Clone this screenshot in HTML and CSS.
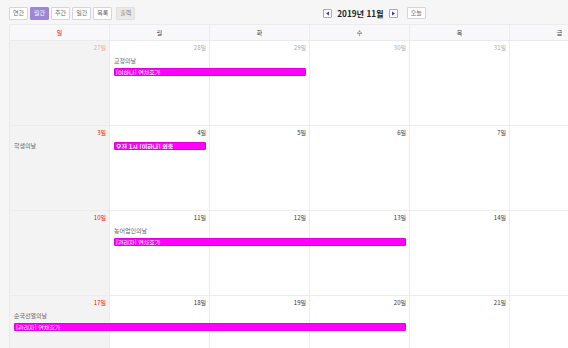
FILE: index.html
```html
<!DOCTYPE html>
<html lang="ko">
<head>
<meta charset="utf-8">
<link rel="stylesheet" href="styles.css">
</head>
<body>
<div class="page">
  <div class="toolbar">
    <div class="views">
      <span class="btn">연간</span>
      <span class="btn active">월간</span>
      <span class="btn">주간</span>
      <span class="btn">일간</span>
      <span class="btn">목록</span>
      <span class="btn print">출력</span>
    </div>
    <div class="nav">
      <span class="navbtn"><svg width="5" height="5" viewBox="0 0 5 5"><path d="M4 0.5 L1 2.5 L4 4.5 Z" fill="#4a2fc2"/></svg></span>
      <span class="title">2019년 11월</span>
      <span class="navbtn"><svg width="5" height="5" viewBox="0 0 5 5"><path d="M1 0.5 L4 2.5 L1 4.5 Z" fill="#4a2fc2"/></svg></span>
      <span class="btn today">오늘</span>
    </div>
  </div>

  <div class="calendar">
    <div class="head">
      <div class="hcell sun">일</div>
      <div class="hcell">월</div>
      <div class="hcell">화</div>
      <div class="hcell">수</div>
      <div class="hcell">목</div>
      <div class="hcell">금</div>
      <div class="hcell">토</div>
    </div>

    <div class="week">
      <div class="day sunday c1"></div><div class="day c2"></div><div class="day c3"></div><div class="day c4"></div><div class="day c5"></div><div class="day c6"></div><div class="day c7"></div>
      <span class="num c1 sun other">27일</span>
      <span class="num c2 other">28일</span>
      <span class="num c3 other">29일</span>
      <span class="num c4 other">30일</span>
      <span class="num c5 other">31일</span>
      <span class="holiday c2">교정의날</span>
      <span class="event r3 s2 e4">[이하나] 연차휴가</span>
    </div>

    <div class="week">
      <div class="day sunday c1"></div><div class="day c2"></div><div class="day c3"></div><div class="day c4"></div><div class="day c5"></div><div class="day c6"></div><div class="day c7"></div>
      <span class="num c1 sun">3일</span>
      <span class="num c2">4일</span>
      <span class="num c3">5일</span>
      <span class="num c4">6일</span>
      <span class="num c5">7일</span>
      <span class="holiday c1">학생의날</span>
      <span class="event r2 s2 e3 strong">오전 1시 [이하나] 외출</span>
    </div>

    <div class="week">
      <div class="day sunday c1"></div><div class="day c2"></div><div class="day c3"></div><div class="day c4"></div><div class="day c5"></div><div class="day c6"></div><div class="day c7"></div>
      <span class="num c1 sun">10일</span>
      <span class="num c2">11일</span>
      <span class="num c3">12일</span>
      <span class="num c4">13일</span>
      <span class="num c5">14일</span>
      <span class="holiday c2">농어업인의날</span>
      <span class="event r3 s2 e5">[관리자] 연차휴가</span>
    </div>

    <div class="week">
      <div class="day sunday c1"></div><div class="day c2"></div><div class="day c3"></div><div class="day c4"></div><div class="day c5"></div><div class="day c6"></div><div class="day c7"></div>
      <span class="num c1 sun">17일</span>
      <span class="num c2">18일</span>
      <span class="num c3">19일</span>
      <span class="num c4">20일</span>
      <span class="num c5">21일</span>
      <span class="holiday c1">순국선열의날</span>
      <span class="event r3 s1 e5">[관리자] 연차휴가</span>
    </div>
  </div>
</div>
</body>
</html>
```

FILE: styles.css
```css
html, body {
  margin: 0;
  padding: 0;
}
body {
  width: 568px;
  height: 348px;
  overflow: hidden;
  background: #f6f6f6;
  font-family: "Noto Sans CJK KR", "Noto Sans", sans-serif;
  color: #444;
}
.page {
  padding: 0 0 0 9px;
  width: 701px;
}
.toolbar {
  display: flex;
  align-items: center;
  height: 24px;
  padding-top: 2px;
  box-sizing: border-box;
}
.views {
  display: flex;
  gap: 2px;
}
.btn {
  display: inline-flex;
  align-items: center;
  justify-content: center;
  height: 11px;
  padding: 0 3px;
  min-width: 11px;
  background: #fff;
  border: 1px solid #d6cff0;
  border-radius: 1px;
  font-size: 6px;
  line-height: 1;
  color: #666;
}
.btn.active {
  background: #9d86d8;
  border-color: #9d86d8;
  color: #fff;
}
.btn.print {
  margin-left: 2px;
  background: #e9e9e9;
  border-color: #e0e0e0;
  color: #777;
}
.nav {
  display: flex;
  align-items: center;
  margin-left: 188px;
}
.navbtn {
  display: inline-flex;
  align-items: center;
  justify-content: center;
  width: 7px;
  height: 7px;
  background: #fff;
  border: 1px solid #a9a0e8;
  border-radius: 1px;
}
.title {
  margin: 0 5px;
  font-size: 8.2px;
  font-weight: bold;
  color: #222;
}
.btn.today {
  margin-left: 9px;
  height: 10px;
}
.calendar {
  border-top: 1px solid #ececf0;
  border-left: 1px solid #eaeaea;
}
.head {
  display: grid;
  grid-template-columns: repeat(7, 100px);
  height: 15px;
  background: #f8f8fb;
  border-bottom: 1px solid #eaeaea;
}
.hcell {
  display: flex;
  align-items: center;
  justify-content: center;
  border-right: 1px solid #ececec;
  font-size: 6px;
  color: #444;
}
.hcell.sun {
  color: #f00;
}
.week {
  display: grid;
  grid-template-columns: repeat(7, 100px);
  grid-template-rows: 14px 12px 9px 1fr;
  height: 84px;
  border-bottom: 1px solid #ececec;
}
.day {
  grid-row: 1 / -1;
  background: #fff;
  border-right: 1px solid #ececec;
}
.day.sunday {
  background: #f3f3f3;
}
.c1 { grid-column: 1; }
.c2 { grid-column: 2; }
.c3 { grid-column: 3; }
.c4 { grid-column: 4; }
.c5 { grid-column: 5; }
.c6 { grid-column: 6; }
.c7 { grid-column: 7; }
.num {
  grid-row: 1;
  justify-self: end;
  align-self: start;
  margin: 3px 4px 0 0;
  font-size: 6px;
  line-height: 8px;
  color: #333;
}
.num.other {
  color: #aaa;
}
.num.sun {
  color: #f00;
}
.num.sun.other {
  color: #f6a0a0;
}
.holiday {
  grid-row: 2;
  align-self: center;
  margin-left: 4px;
  font-size: 6px;
  line-height: 8px;
  color: #666;
}
.event {
  align-self: center;
  margin: 0 4px 0 4px;
  height: 8px;
  padding: 0 1px;
  background: #ff00ff;
  border: 0.5px solid #e000e0;
  border-radius: 1px;
  color: #fff;
  font-size: 6px;
  line-height: 7px;
  white-space: nowrap;
  overflow: hidden;
  box-sizing: border-box;
}
.event.strong {
  font-weight: bold;
}
.r2 { grid-row: 2; }
.r3 { grid-row: 3; align-self: end; }
.s1 { grid-column-start: 1; }
.s2 { grid-column-start: 2; }
.e3 { grid-column-end: 3; }
.e4 { grid-column-end: 4; }
.e5 { grid-column-end: 5; }
```
